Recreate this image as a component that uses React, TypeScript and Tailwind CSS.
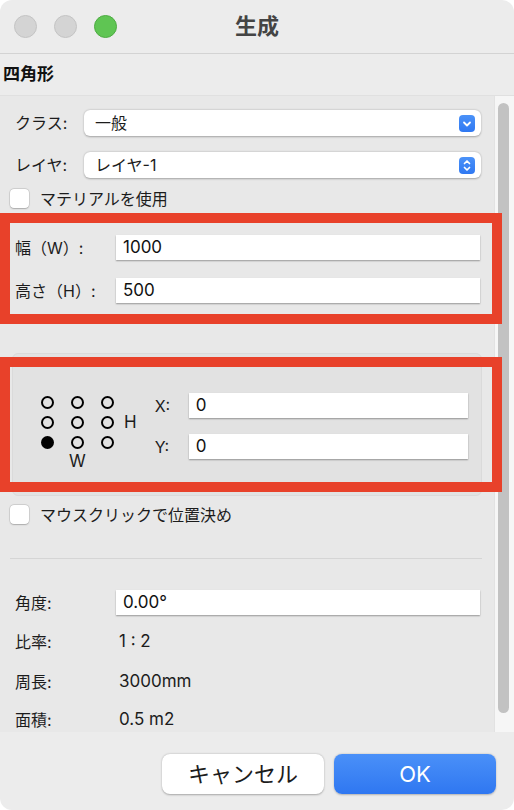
import React from 'react';

const field =
  'h-[25px] bg-white shadow-[0_1px_1.5px_rgba(0,0,0,0.35)] flex items-center pl-[7px] text-[17px] text-[#111]';

function ChevronDown() {
  return (
    <svg width="16" height="17" viewBox="0 0 16 17">
      <path d="M5 7.5 L8 10.5 L11 7.5" fill="none" stroke="white" strokeWidth="1.8" strokeLinecap="round" strokeLinejoin="round" />
    </svg>
  );
}

function ChevronsUpDown() {
  return (
    <svg width="16" height="17" viewBox="0 0 16 17">
      <path d="M5.5 6.5 L8 4 L10.5 6.5" fill="none" stroke="white" strokeWidth="1.7" strokeLinecap="round" strokeLinejoin="round" />
      <path d="M5.5 10.5 L8 13 L10.5 10.5" fill="none" stroke="white" strokeWidth="1.7" strokeLinecap="round" strokeLinejoin="round" />
    </svg>
  );
}

function Select({ value, icon }: { value: string; icon: React.ReactNode }) {
  return (
    <div className="flex-1 h-[26px] mr-[13px] bg-white rounded-[6px] shadow-[0_0.5px_2px_rgba(0,0,0,0.3)] flex items-center pl-[11px] pr-[6px]">
      <span className="flex-1 text-[16px] text-[#1c1c1c]">{value}</span>
      <span className="w-[16px] h-[17px] rounded-[4px] bg-gradient-to-b from-[#4b92f8] to-[#2f78f2] flex items-center justify-center">
        {icon}
      </span>
    </div>
  );
}

function Checkbox({ label }: { label: string }) {
  return (
    <div className="flex items-center h-[19px] pl-[10px]">
      <span className="w-[19px] h-[19px] bg-white rounded-[4px] shadow-[0_0_0_0.5px_rgba(0,0,0,0.15),0_0.5px_1.5px_rgba(0,0,0,0.2)]" />
      <span className="ml-[11px] text-[16px] text-[#1c1c1c]">{label}</span>
    </div>
  );
}

function Dot({ filled }: { filled?: boolean }) {
  return (
    <span
      className={
        filled
          ? 'w-[13px] h-[13px] rounded-full bg-black'
          : 'w-[13px] h-[13px] rounded-full border-[2px] border-black'
      }
    />
  );
}

export default function App() {
  return (
    <div className="w-[514px] h-[810px] bg-[#ececec] rounded-[12px] overflow-hidden flex flex-col font-['Inter','Noto_Sans_CJK_JP',sans-serif] text-[#1c1c1c]">
      {/* title bar */}
      <div className="h-[54px] shrink-0 grid grid-cols-[1fr_auto_1fr] items-center border-b border-[#d3d3d3]">
        <div className="flex items-center gap-[17px] pl-[14px]">
          <span className="w-[23px] h-[23px] rounded-full bg-[#d4d4d4] border border-[#c4c4c4]" />
          <span className="w-[23px] h-[23px] rounded-full bg-[#d4d4d4] border border-[#c4c4c4]" />
          <span className="w-[23px] h-[23px] rounded-full bg-[#5fc553] border border-[#4dab42]" />
        </div>
        <div className="text-[22px] font-bold text-[#444]">生成</div>
        <div />
      </div>

      {/* header */}
      <div className="h-[42px] shrink-0 flex items-center pl-[3px] text-[17px] font-bold text-[#111] border-b border-[#e0e0e0]">
        四角形
      </div>

      {/* content */}
      <div className="h-[636px] shrink-0 flex overflow-hidden bg-[#e8e8e8]">
        <div className="w-[494px] shrink-0 flex flex-col pt-[14px]">
          <div className="flex items-center h-[26px]">
            <span className="w-[84px] pl-[15px] text-[16px]">クラス:</span>
            <Select value="一般" icon={<ChevronDown />} />
          </div>
          <div className="flex items-center h-[26px] mt-[16px]">
            <span className="w-[84px] pl-[15px] text-[16px]">レイヤ:</span>
            <Select value="レイヤ-1" icon={<ChevronsUpDown />} />
          </div>
          <div className="mt-[11px]">
            <Checkbox label="マテリアルを使用" />
          </div>

          {/* size */}
          <div className="relative mt-[27px] flex flex-col gap-[18px]">
            <div className="flex items-center">
              <span className="w-[116px] pl-[15px] text-[16px]">幅（W）:</span>
              <div className={`${field} flex-1 mr-[14px]`}>1000</div>
            </div>
            <div className="flex items-center">
              <span className="w-[116px] pl-[15px] text-[16px]">高さ（H）:</span>
              <div className={`${field} flex-1 mr-[14px] h-[24px]`}>500</div>
            </div>
            <div className="absolute z-10 top-[-22px] bottom-[-21px] left-0 right-[-8px] border-[10px] border-[#e8412a] pointer-events-none" />
          </div>

          {/* origin */}
          <div className="relative mt-[50px] mx-[12px] h-[146px] rounded-[6px] bg-[#e2e2e2] border border-[#dadada] flex items-start pt-[39px]">
            <div className="ml-[28px] mt-[3px] grid grid-cols-[13px_13px_13px_auto] gap-x-[17px] gap-y-[7px] items-center">
              <Dot /><Dot /><Dot /><span />
              <Dot /><Dot /><Dot /><span className="-ml-[7px] text-[17px] leading-[13px]">H</span>
              <Dot filled /><Dot /><Dot /><span />
              <span /><span className="-mt-[4px] -ml-[2px] text-[17px] leading-[18px]">W</span><span /><span />
            </div>
            <div className="ml-[18px] flex-1 mr-[13px] flex flex-col gap-[16px]">
              <div className="flex items-center">
                <span className="w-[34px] text-[16px]">X:</span>
                <div className={`${field} flex-1 h-[24px]`}>0</div>
              </div>
              <div className="flex items-center">
                <span className="w-[34px] text-[16px]">Y:</span>
                <div className={`${field} flex-1 h-[24px]`}>0</div>
              </div>
            </div>
            <div className="absolute z-10 top-[3px] bottom-[3px] left-[-13px] right-[-21px] border-[10px] border-[#e8412a] pointer-events-none" />
          </div>

          <div className="mt-[9px]">
            <Checkbox label="マウスクリックで位置決め" />
          </div>

          <div className="mt-[34px] ml-[10px] mr-[12px] h-px bg-[#d5d5d5]" />

          <div className="flex items-center mt-[31px]">
            <span className="w-[116px] pl-[15px] text-[16px]">角度:</span>
            <div className={`${field} flex-1 mr-[14px] h-[24px]`}>0.00°</div>
          </div>
          <div className="flex items-center h-[24px] mt-[15px]">
            <span className="w-[119px] pl-[15px] text-[16px]">比率:</span>
            <span className="text-[17px] whitespace-pre">1 : 2</span>
          </div>
          <div className="flex items-center h-[24px] mt-[16px]">
            <span className="w-[119px] pl-[15px] text-[16px]">周長:</span>
            <span className="text-[17px]">3000mm</span>
          </div>
          <div className="flex items-center h-[24px] mt-[14px]">
            <span className="w-[119px] pl-[15px] text-[16px]">面積:</span>
            <span className="text-[17px]">0.5 m2</span>
          </div>
        </div>

        {/* scrollbar */}
        <div className="flex-1 bg-[#f6f6f6] border-l border-[#e2e2e2] pt-[7px] pl-[3px] pr-[4px]">
          <div className="w-[11px] h-[610px] rounded-full bg-[#c2c2c2]" />
        </div>
      </div>

      {/* footer */}
      <div className="flex-1 flex justify-end items-start gap-[10px] pt-[22px] pr-[18px]">
        <button className="w-[162px] h-[40px] rounded-[8px] bg-white shadow-[0_0.5px_2px_rgba(0,0,0,0.3)] text-[22px] text-[#1c1c1c]">
          キャンセル
        </button>
        <button className="w-[162px] h-[40px] rounded-[8px] bg-gradient-to-b from-[#4a90f8] to-[#2f77f1] shadow-[0_0.5px_2px_rgba(0,0,0,0.25)] text-[22px] text-white">
          OK
        </button>
      </div>
    </div>
  );
}
